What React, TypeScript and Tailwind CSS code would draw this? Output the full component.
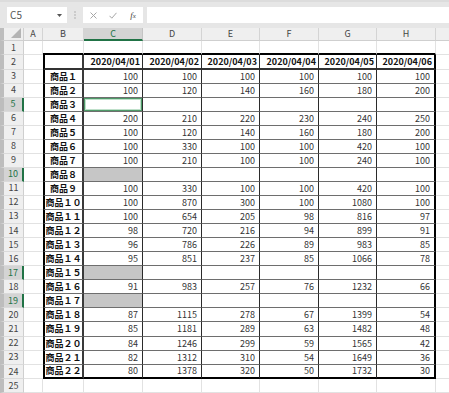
import React from 'react';

type Col = { k: string; w: string };
const COLS: Col[] = [
  { k: 'A', w: 'w-[19px]' },
  { k: 'B', w: 'w-[41px]' },
  { k: 'C', w: 'w-[59px]' },
  { k: 'D', w: 'w-[59px]' },
  { k: 'E', w: 'w-[58px]' },
  { k: 'F', w: 'w-[59px]' },
  { k: 'G', w: 'w-[58px]' },
  { k: 'H', w: 'w-[59px]' },
];

const DATES = ['2020/04/01', '2020/04/02', '2020/04/03', '2020/04/04', '2020/04/05', '2020/04/06'];

const DATA: Record<number, [string, number[] | null]> = {
  3: ['商品１', [100, 100, 100, 100, 100, 100]],
  4: ['商品２', [100, 120, 140, 160, 180, 200]],
  5: ['商品３', null],
  6: ['商品４', [200, 210, 220, 230, 240, 250]],
  7: ['商品５', [100, 120, 140, 160, 180, 200]],
  8: ['商品６', [100, 330, 100, 100, 420, 100]],
  9: ['商品７', [100, 210, 100, 100, 240, 100]],
  10: ['商品８', null],
  11: ['商品９', [100, 330, 100, 100, 420, 100]],
  12: ['商品１０', [100, 870, 300, 100, 1080, 100]],
  13: ['商品１１', [100, 654, 205, 98, 816, 97]],
  14: ['商品１２', [98, 720, 216, 94, 899, 91]],
  15: ['商品１３', [96, 786, 226, 89, 983, 85]],
  16: ['商品１４', [95, 851, 237, 85, 1066, 78]],
  17: ['商品１５', null],
  18: ['商品１６', [91, 983, 257, 76, 1232, 66]],
  19: ['商品１７', null],
  20: ['商品１８', [87, 1115, 278, 67, 1399, 54]],
  21: ['商品１９', [85, 1181, 289, 63, 1482, 48]],
  22: ['商品２０', [84, 1246, 299, 59, 1565, 42]],
  23: ['商品２１', [82, 1312, 310, 54, 1649, 36]],
  24: ['商品２２', [80, 1378, 320, 50, 1732, 30]],
};

const SELECTED_ROWS = [5, 10, 17, 19];
const TALL_ROWS = [2, 14, 21, 24];

function rowHeight(r: number) {
  if (TALL_ROWS.includes(r)) return 'h-[15px]';
  return 'h-[14px]';
}

function cellBorders(r: number, ci: number): string {
  const inTable = r >= 2 && r <= 24;
  const k = COLS[ci].k;
  if (k === 'A') {
    if (inTable) return 'border-b border-b-[#e2e2e2]';
    return 'border-r border-r-[#e2e2e2] border-b border-b-[#e2e2e2]';
  }
  if (!inTable) {
    if (r === 1) return 'border-r border-r-[#e2e2e2] border-b-2 border-b-black';
    return 'border-r border-r-[#e2e2e2] border-b border-b-[#e2e2e2]';
  }
  let s = '';
  if (k === 'B') s += 'border-l-2 border-l-black border-r-2 border-r-[#3a3a3a] ';
  else if (k === 'H') s += 'border-r-2 border-r-black ';
  else s += 'border-r border-r-[#2b2b2b] ';
  if (r === 24) s += 'border-b-2 border-b-black';
  else if (r === 2) s += 'border-b-2 border-b-[#333333]';
  else s += 'border-b border-b-[#6e6e6e]';
  return s;
}

function CellContent({ r, ci }: { r: number; ci: number }) {
  const k = COLS[ci].k;
  if (r === 2 && ci >= 2) {
    return (
      <span className="w-full text-right pr-[2px] font-bold text-[9px] text-[#111]">{DATES[ci - 2]}</span>
    );
  }
  const d = DATA[r];
  if (!d) return null;
  if (k === 'B') {
    return <span className="w-full text-center font-bold text-[9px] text-[#111] whitespace-nowrap">{d[0]}</span>;
  }
  if (ci >= 2 && d[1]) {
    return <span className="w-full text-right pr-[4px] text-[9px] text-[#333]">{d[1][ci - 2]}</span>;
  }
  return null;
}

function RowHeader({ r }: { r: number }) {
  const sel = SELECTED_ROWS.includes(r);
  return (
    <div
      className={
        'w-[24px] shrink-0 h-full flex items-center justify-center border-l-4 border-l-[#bdbdbd] border-b border-b-[#dadada] text-[9px] ' +
        (sel
          ? 'bg-[#d4d4d4] border-r-2 border-r-[#217346] text-[#217346]'
          : 'bg-[#efefef] border-r border-r-[#cfcfcf] text-[#444]')
      }
    >
      {r}
    </div>
  );
}

function Row({ r }: { r: number }) {
  return (
    <div className={'flex ' + rowHeight(r)}>
      <RowHeader r={r} />
      {COLS.map((c, ci) => {
        let bg = 'bg-white';
        let extra = '';
        if (c.k === 'C' && (r === 10 || r === 17 || r === 19)) bg = 'bg-[#c6c6c6]';
        if (c.k === 'C' && r === 5) extra = ' shadow-[inset_0_0_0_1px_#4f9a69,inset_0_0_0_2px_#bfe0ca]';
        return (
          <div
            key={c.k}
            className={'shrink-0 h-full flex items-center leading-none overflow-hidden ' + c.w + ' ' + bg + ' ' + cellBorders(r, ci) + extra}
          >
            <CellContent r={r} ci={ci} />
          </div>
        );
      })}
      <div className="flex-1 h-full border-b border-b-[#e2e2e2] bg-white" />
    </div>
  );
}

function HeaderRow() {
  return (
    <div className="flex h-[14px]">
      <div className="w-[24px] shrink-0 h-full relative bg-[#efefef] border-l-4 border-l-[#bdbdbd] border-r border-r-[#cfcfcf] border-b border-b-[#cfcfcf]">
        <svg width="10" height="10" viewBox="0 0 10 10" className="absolute right-[2px] bottom-[2px]">
          <polygon points="10,0 10,10 0,10" fill="#b4b4b4" />
        </svg>
      </div>
      {COLS.map((c) => {
        const sel = c.k === 'C';
        return (
          <div
            key={c.k}
            className={
              'shrink-0 h-full flex items-center justify-center text-[9px] leading-none ' +
              c.w +
              ' ' +
              (sel
                ? 'bg-[#d4d4d4] text-[#217346] border-r border-r-[#c4c4c4] border-b-2 border-b-[#217346]'
                : 'bg-[#efefef] text-[#444] border-r border-r-[#d4d4d4] border-b border-b-[#cfcfcf]')
            }
          >
            {c.k}
          </div>
        );
      })}
      <div className="flex-1 h-full bg-[#efefef] border-b border-b-[#cfcfcf]" />
    </div>
  );
}

function Toolbar() {
  return (
    <div className="h-[29px] bg-[#e6e6e6] flex items-start pt-[7px] pl-[7px] border-t-2 border-t-[#dcdcdc]">
      <div className="w-[60px] h-[16px] bg-white flex items-center justify-between pl-[3px] pr-[5px] -mt-[2px]">
        <span className="text-[10px] text-[#555] leading-none">C5</span>
        <svg width="5" height="3" viewBox="0 0 5 3">
          <polygon points="0,0 5,0 2.5,3" fill="#555" />
        </svg>
      </div>
      <div className="w-[16px] h-[16px] flex items-center justify-center -mt-[2px]">
        <svg width="2" height="8" viewBox="0 0 2 8">
          <circle cx="1" cy="1" r="0.8" fill="#a8a8a8" />
          <circle cx="1" cy="4" r="0.8" fill="#a8a8a8" />
          <circle cx="1" cy="7" r="0.8" fill="#a8a8a8" />
        </svg>
      </div>
      <div className="w-[60px] h-[16px] bg-white flex items-center -mt-[2px]">
        <div className="w-[20px] flex justify-center">
          <svg width="7" height="7" viewBox="0 0 7 7">
            <path d="M0.5 0.5 L6.5 6.5 M6.5 0.5 L0.5 6.5" stroke="#a6a6a6" strokeWidth="1" />
          </svg>
        </div>
        <div className="w-[20px] flex justify-center">
          <svg width="8" height="7" viewBox="0 0 8 7">
            <path d="M0.5 3.8 L2.8 6.2 L7.5 0.8" stroke="#a6a6a6" strokeWidth="1" fill="none" />
          </svg>
        </div>
        <div className="w-[20px] flex justify-center">
          <span className="text-[9px] italic text-[#444] leading-none" style={{ fontFamily: '"Liberation Serif", serif' }}>
            f<span className="text-[7px]">x</span>
          </span>
        </div>
      </div>
      <div className="flex-1 h-[16px] bg-white ml-[4px] -mt-[2px]" />
    </div>
  );
}

export default function App() {
  const rows = Array.from({ length: 25 }, (_, i) => i + 1);
  return (
    <div
      className="w-[449px] h-[393px] overflow-hidden bg-white flex flex-col"
      style={{ fontFamily: '"Noto Sans CJK JP", "Noto Sans", sans-serif' }}
    >
      <Toolbar />
      <HeaderRow />
      {rows.map((r) => (
        <Row key={r} r={r} />
      ))}
    </div>
  );
}
